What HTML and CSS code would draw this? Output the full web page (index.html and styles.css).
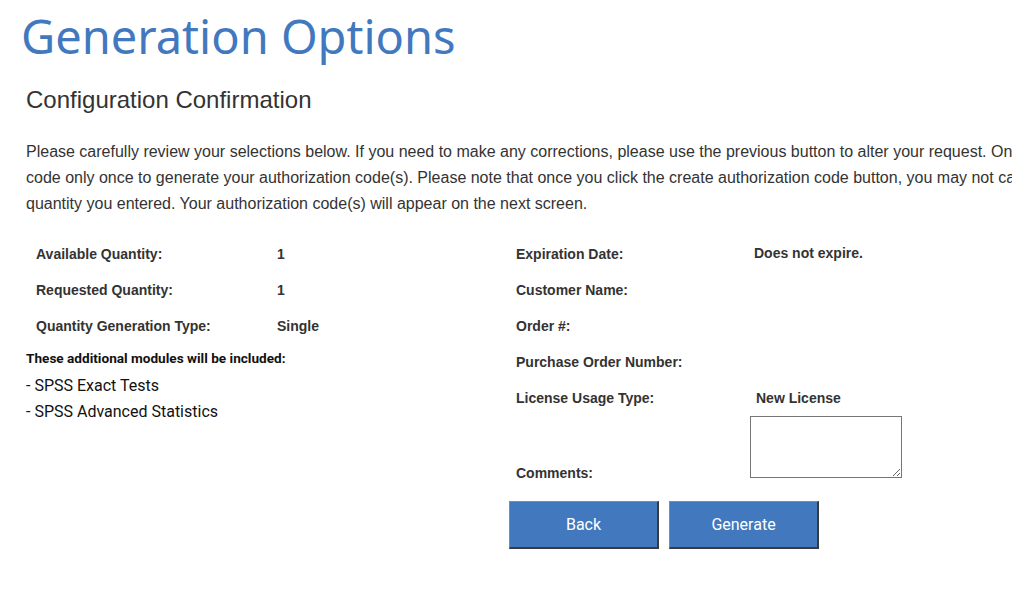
FILE: index.html
```html
<!DOCTYPE html>
<html lang="en">
<head>
<meta charset="utf-8">
<title>Generation Options</title>
<link rel="stylesheet" href="styles.css">
</head>
<body>
<div class="page">
  <h1 class="title">Generation Options</h1>
  <h2 class="subtitle">Configuration Confirmation</h2>
  <p class="intro">Please carefully review your selections below. If you need to make any corrections, please use the previous button to alter your request. Once ready, click create code only once to generate your authorization code(s). Please note that once you click the create authorization code button, you may not cancel or change the quantity you entered. Your authorization code(s) will appear on the next screen.</p>

  <div class="summary">
    <div class="col col-left">
      <div class="row"><span class="label">Available Quantity:</span><span class="value">1</span></div>
      <div class="row"><span class="label">Requested Quantity:</span><span class="value">1</span></div>
      <div class="row"><span class="label">Quantity Generation Type:</span><span class="value">Single</span></div>
      <div class="modules">
        <div class="modules-title">These additional modules will be included:</div>
        <div class="module">- SPSS Exact Tests</div>
        <div class="module">- SPSS Advanced Statistics</div>
      </div>
    </div>
    <div class="col col-right">
      <div class="row"><span class="label">Expiration Date:</span><span class="value value-up">Does not expire.</span></div>
      <div class="row"><span class="label">Customer Name:</span><span class="value"></span></div>
      <div class="row"><span class="label">Order #:</span><span class="value"></span></div>
      <div class="row"><span class="label">Purchase Order Number:</span><span class="value"></span></div>
      <div class="row"><span class="label">License Usage Type:</span><span class="value value-nudge">New License</span></div>
      <div class="row row-comments"><span class="label">Comments:</span><textarea class="comments"></textarea></div>
      <div class="actions">
        <button class="btn" type="button">Back</button>
        <button class="btn" type="button">Generate</button>
      </div>
    </div>
  </div>
</div>
</body>
</html>
```
FILE: styles.css
```css
html, body {
  margin: 0;
  padding: 0;
  background: #fff;
  overflow: hidden;
}

.page {
  width: 1180px;
  padding-left: 26px;
  color: #333;
  font-family: "Liberation Sans", Arial, sans-serif;
}

.title {
  margin: 0 0 0 -5px;
  padding-top: 5px;
  font-family: "Noto Sans", sans-serif;
  font-weight: 400;
  font-size: 47px;
  line-height: 62px;
  color: #4178be;
}

.subtitle {
  margin: 19px 0 0 0;
  font-weight: 400;
  font-size: 24px;
  line-height: 28px;
  color: #333;
}

.intro {
  width: 1172px;
  margin: 25px 0 0 0;
  font-size: 16px;
  line-height: 26px;
  color: #333;
}

.summary {
  display: flex;
  margin-top: 19px;
}

.col {
  width: 480px;
  display: flex;
  flex-direction: column;
}

.row {
  display: flex;
  align-items: center;
  height: 36px;
  font-size: 14px;
  font-weight: 700;
}

.label {
  padding-left: 10px;
  width: 238px;
  flex: none;
}

.col-left .label {
  width: 241px;
}

.value-up {
  position: relative;
  top: -1px;
}

.value-nudge {
  padding-left: 2px;
}

.modules {
  margin-top: 6px;
}

.modules-title {
  font-family: "Roboto", sans-serif;
  font-weight: 700;
  font-size: 13.6px;
  line-height: 16px;
  color: #111;
}

.module {
  font-family: "Roboto", sans-serif;
  font-size: 16px;
  line-height: 26px;
  color: #111;
}

.modules-title + .module {
  margin-top: 7px;
}

.row-comments {
  height: auto;
  align-items: flex-end;
}

.row-comments .label {
  line-height: 16px;
  margin-bottom: -3px;
}

.comments {
  box-sizing: border-box;
  width: 152px;
  height: 62px;
  margin: 0 0 0 -4px;
  border: 1px solid #767676;
  border-radius: 0;
  padding: 2px;
  resize: both;
  font: 13px "Liberation Sans", Arial, sans-serif;
}

.actions {
  display: flex;
  gap: 10px;
  margin: 23px 0 0 3px;
}

.btn {
  box-sizing: border-box;
  width: 150px;
  height: 48px;
  background: #4178be;
  color: #fff;
  font-family: "Roboto", sans-serif;
  font-size: 16px;
  border-style: solid;
  border-width: 1px 2px 2px 1px;
  border-color: #8a8a8a #3a3a3a #3a3a3a #8a8a8a;
  cursor: pointer;
}
```
